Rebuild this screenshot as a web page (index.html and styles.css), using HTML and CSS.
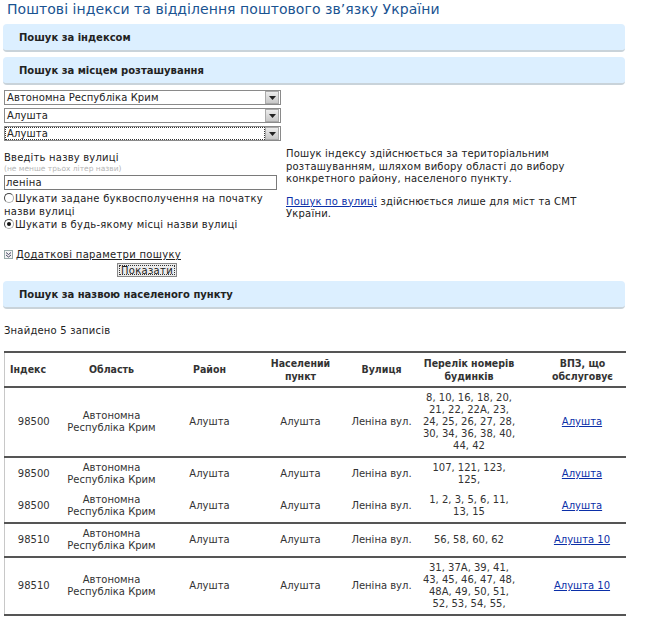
FILE: index.html
```html
<!DOCTYPE html>
<html lang="uk">
<head>
<meta charset="utf-8">
<title>Поштові індекси</title>
<link rel="stylesheet" href="styles.css">
</head>
<body>
<h1 class="title">Поштові індекси та відділення поштового зв’язку України</h1>

<div class="panel">Пошук за індексом</div>
<div class="panel">Пошук за місцем розташування</div>

<div class="locform">
  <div class="left">
    <div class="select"><span class="sel-text">Автономна Республіка Крим</span><span class="sel-btn"><svg width="7" height="4" viewBox="0 0 7 4"><path d="M0 0h7L3.5 4z" fill="#222"/></svg></span></div>
    <div class="select"><span class="sel-text">Алушта</span><span class="sel-btn"><svg width="7" height="4" viewBox="0 0 7 4"><path d="M0 0h7L3.5 4z" fill="#222"/></svg></span></div>
    <div class="select focused"><span class="sel-text">Алушта</span><span class="sel-btn"><svg width="7" height="4" viewBox="0 0 7 4"><path d="M0 0h7L3.5 4z" fill="#222"/></svg></span></div>

    <div class="street-label">Введіть назву вулиці</div>
    <div class="hint">(не менше трьох літер назви)</div>
    <div class="input">леніна</div>

    <div class="radio-row first"><span class="radio"></span>Шукати задане буквосполучення на початку назви вулиці</div>
    <div class="radio-row"><span class="radio checked"></span>Шукати в будь-якому місці назви вулиці</div>
  </div>
  <div class="right">
    <p>Пошук індексу здійснюється за територіальним розташуванням, шляхом вибору області до вибору конкретного району, населеного пункту.</p>
    <p><a href="#" class="link">Пошук по вулиці</a> здійснюється лише для міст та СМТ України.</p>
  </div>
</div>

<div class="more"><span class="more-icon"><svg width="9" height="9" viewBox="0 0 9 9"><rect x="0.5" y="0.5" width="8" height="8" fill="#f4f4f4" stroke="#9aa"/><path d="M2 2.5l2.5 2 2.5-2M2 5l2.5 2 2.5-2" fill="none" stroke="#335" stroke-width="0.9"/></svg></span><span class="more-text">Додаткові параметри пошуку</span></div>
<div class="btn-row"><span class="button">Показати</span></div>

<div class="panel">Пошук за назвою населеного пункту</div>

<div class="found">Знайдено 5 записів</div>

<table class="results">
  <colgroup>
    <col class="w-idx"><col class="w-obl"><col class="w-ray"><col class="w-np"><col class="w-st"><col class="w-num"><col class="w-vpz">
  </colgroup>
  <thead>
    <tr>
      <th class="c-idx">Індекс</th>
      <th>Область</th>
      <th>Район</th>
      <th>Населений пункт</th>
      <th>Вулиця</th>
      <th>Перелік номерів будинків</th>
      <th class="c-vpz">ВПЗ, що обслуговує</th>
    </tr>
  </thead>
  <tbody>
    <tr class="sep">
      <td class="c-idx">98500</td><td>Автономна Республіка Крим</td><td>Алушта</td><td>Алушта</td><td>Леніна вул.</td>
      <td>8, 10, 16, 18, 20, 21, 22, 22А, 23, 24, 25, 26, 27, 28, 30, 34, 36, 38, 40, 44, 42</td>
      <td class="c-vpz"><a href="#" class="link">Алушта</a></td>
    </tr>
    <tr>
      <td class="c-idx">98500</td><td>Автономна Республіка Крим</td><td>Алушта</td><td>Алушта</td><td>Леніна вул.</td>
      <td>107, 121, 123, 125,</td>
      <td class="c-vpz"><a href="#" class="link">Алушта</a></td>
    </tr>
    <tr class="sep">
      <td class="c-idx">98500</td><td>Автономна Республіка Крим</td><td>Алушта</td><td>Алушта</td><td>Леніна вул.</td>
      <td>1, 2, 3, 5, 6, 11, 13, 15</td>
      <td class="c-vpz"><a href="#" class="link">Алушта</a></td>
    </tr>
    <tr class="sep">
      <td class="c-idx">98510</td><td>Автономна Республіка Крим</td><td>Алушта</td><td>Алушта</td><td>Леніна вул.</td>
      <td>56, 58, 60, 62</td>
      <td class="c-vpz"><a href="#" class="link">Алушта 10</a></td>
    </tr>
    <tr class="sep">
      <td class="c-idx">98510</td><td>Автономна Республіка Крим</td><td>Алушта</td><td>Алушта</td><td>Леніна вул.</td>
      <td>31, 37А, 39, 41, 43, 45, 46, 47, 48, 48А, 49, 50, 51, 52, 53, 54, 55,</td>
      <td class="c-vpz"><a href="#" class="link">Алушта 10</a></td>
    </tr>
  </tbody>
</table>
</body>
</html>
```

FILE: styles.css
```css
* { box-sizing: border-box; }
html, body { margin: 0; padding: 0; background: #fff; }
body {
  font-family: "DejaVu Sans", Verdana, sans-serif;
  font-size: 10px;
  color: #222;
  padding: 0 0 0 4px;
  width: 630px;
}
.title {
  font-family: "DejaVu Sans", sans-serif;
  font-weight: normal;
  font-size: 14px;
  letter-spacing: 0.05px;
  color: #1a5391;
  margin: 0;
  padding: 1px 0 0 3px;
  height: 20px;
  line-height: 17px;
}
.panel {
  margin: 4px 0 5px -1px;
  width: 622px;
  height: 28px;
  background: #dcefff;
  border-radius: 4px;
  border-bottom: 2px solid #c9d3da;
  font-weight: bold;
  font-size: 10px;
  color: #222;
  padding: 8px 0 0 16px;
  line-height: 12px;
}
.locform {
  display: grid;
  grid-template-columns: 282px 1fr;
  margin-top: 4px;
}
.left { display: flex; flex-direction: column; }
.select {
  display: flex;
  width: 277px;
  height: 15px;
  border: 1px solid #8a8a8a;
  margin-bottom: 3px;
  font-size: 10px;
  line-height: 13px;
  letter-spacing: 0.1px;
}
.select.focused .sel-text { outline: 1px dotted #333; outline-offset: -1px; }
.sel-text { flex: 1; padding-left: 2px; }
.sel-btn {
  width: 14px;
  margin: 0 1px 0 0;
  background: linear-gradient(#ececec, #c8c8c8);
  border: 1px solid #aaa;
  display: flex;
  align-items: center;
  justify-content: center;
}
.street-label {
  margin-top: 7px;
  font-size: 10px;
  letter-spacing: 0.2px;
  line-height: 13px;
}
.hint {
  font-size: 7.5px;
  color: #b5b5b5;
  line-height: 10px;
}
.input {
  margin-top: 1px;
  width: 273px;
  height: 15px;
  border: 1px solid #7a7a7a;
  font-size: 10px;
  line-height: 13px;
  padding-left: 1px;
  letter-spacing: 0.2px;
}
.radio-row {
  font-size: 10px;
  letter-spacing: 0.25px;
  line-height: 13px;
  color: #222;
}
.radio-row.first { margin-top: 2px; }
.radio {
  display: inline-block;
  width: 10px;
  height: 10px;
  border-radius: 50%;
  border: 1px solid #aaa;
  border-left-color: #444;
  border-top-color: #444;
  background: #fff;
  vertical-align: -1px;
  margin-right: 1px;
  position: relative;
}
.radio.checked::after {
  content: "";
  position: absolute;
  left: 2px; top: 2px;
  width: 4px; height: 4px;
  border-radius: 50%;
  background: #111;
}
.right {
  padding-top: 58px;
  font-size: 10px;
  line-height: 12.5px;
  letter-spacing: 0.2px;
  color: #222;
}
.right p { margin: 0 0 10px 0; width: 320px; }
.link { color: #0b2fa8; text-decoration: underline; }
.more {
  margin-top: 17px;
  display: flex;
  align-items: center;
  font-size: 10px;
  letter-spacing: 0.3px;
  line-height: 13px;
  height: 13px;
}
.more-icon { display: inline-flex; margin-right: 3px; }
.more-text { text-decoration: underline; }
.btn-row { width: 286px; display: flex; justify-content: center; margin-top: 2px; }
.button {
  display: inline-block;
  background: #ececec;
  border: 1px solid #888;
  outline: 1px dotted #333;
  outline-offset: -3px;
  font-size: 10px;
  letter-spacing: 0.3px;
  line-height: 11px;
  padding: 1px 3px;
  height: 14px;
}
.btn-row + .panel { margin-top: 4px; }
.found {
  margin-top: 16px;
  font-size: 10px;
  letter-spacing: 0.2px;
  line-height: 12px;
}
.results {
  margin-top: 14px;
  width: 621px;
  table-layout: fixed;
  border-collapse: collapse;
  border-left: 1px solid #c8c8c8;
  border-top: 2px solid #555;
  font-size: 10px;
  color: #333;
}
.w-idx { width: 58px; }
.w-obl { width: 98px; }
.w-ray { width: 98px; }
.w-np { width: 84px; }
.w-st { width: 78px; }
.w-num { width: 97px; }
.w-vpz { width: 108px; }
.results th {
  font-family: "DejaVu Sans Condensed", "DejaVu Sans", sans-serif;
  font-weight: bold;
  font-size: 10.5px;
  line-height: 13px;
  color: #333;
  height: 35px;
  border-bottom: 2px solid #555;
  padding: 1px 0;
}
.results td {
  text-align: center;
  line-height: 12px;
  padding: 4px 1px;
  vertical-align: middle;
}
.results tr.sep td { border-bottom: 2px solid #555; }
.results th.c-idx { text-align: left; padding-left: 5px; }
.results .c-vpz { padding-left: 22px; }
```
